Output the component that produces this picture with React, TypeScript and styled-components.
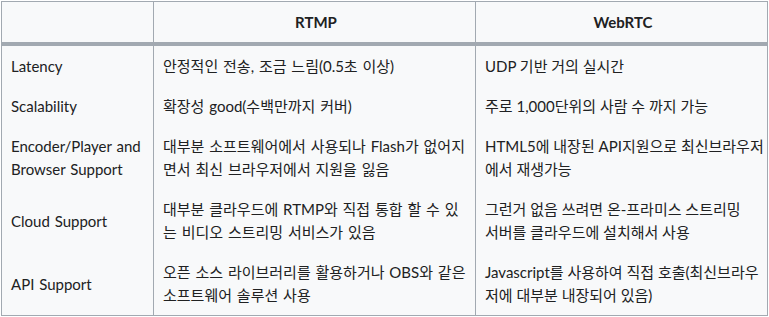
import React from "react";
import styled, { createGlobalStyle } from "styled-components";

const GlobalStyle = createGlobalStyle`
  html, body {
    margin: 0;
    padding: 0;
    background: #ffffff;
  }
  body {
    font-family: Lato, "Noto Sans CJK KR", sans-serif;
    color: #202122;
  }
`;

const Page = styled.div`
  padding: 1px 0 0 1px;
`;

const Table = styled.table`
  width: 767px;
  border-collapse: collapse;
  background: #f8f9fa;
  border: 1px solid #a2a9b1;
  font-size: 15px;
  line-height: 23px;
  word-spacing: 1px;
  table-layout: fixed;
`;

const Col = styled.col<{ $w?: number }>`
  width: ${(p) => (p.$w ? `${p.$w}px` : "auto")};
`;

const HeadCell = styled.th`
  border-left: 1px solid #a2a9b1;
  border-bottom: 4px solid #a2a9b1;
  padding: 9px 6px 8px 9px;
  font-weight: bold;
  text-align: center;
  &:first-child {
    border-left: none;
  }
`;

const Cell = styled.td<{ $keep?: boolean }>`
  border-left: 1px solid #a2a9b1;
  padding: 9px 6px 8px 9px;
  vertical-align: middle;
  word-break: ${(p) => (p.$keep ? "keep-all" : "normal")};
  &:first-child {
    border-left: none;
  }
  &:last-child {
    padding-right: 0;
    word-spacing: 0;
  }
`;

type Row = { name: string; rtmp: string; webrtc: string; keep?: boolean };

const rows: Row[] = [
  { name: "Latency", rtmp: "안정적인 전송, 조금 느림(0.5초 이상)", webrtc: "UDP 기반 거의 실시간" },
  { name: "Scalability", rtmp: "확장성 good(수백만까지 커버)", webrtc: "주로 1,000단위의 사람 수 까지 가능" },
  {
    name: "Encoder/Player and Browser Support",
    rtmp: "대부분 소프트웨어에서 사용되나 Flash가 없어지면서 최신 브라우저에서 지원을 잃음",
    webrtc: "HTML5에 내장된 API지원으로 최신브라우저에서 재생가능",
  },
  {
    name: "Cloud Support",
    rtmp: "대부분 클라우드에 RTMP와 직접 통합 할 수 있는 비디오 스트리밍 서비스가 있음",
    webrtc: "그런거 없음 쓰려면 온-프라미스 스트리밍 서버를 클라우드에 설치해서 사용",
    keep: true,
  },
  {
    name: "API Support",
    rtmp: "오픈 소스 라이브러리를 활용하거나 OBS와 같은 소프트웨어 솔루션 사용",
    webrtc: "Javascript를 사용하여 직접 호출(최신브라우저에 대부분 내장되어 있음)",
  },
];

export default function App() {
  return (
    <Page>
      <GlobalStyle />
      <Table>
        <colgroup>
          <Col $w={152} />
          <Col $w={322} />
          <Col />
        </colgroup>
        <thead>
          <tr>
            <HeadCell></HeadCell>
            <HeadCell>RTMP</HeadCell>
            <HeadCell>WebRTC</HeadCell>
          </tr>
        </thead>
        <tbody>
          {rows.map((r) => (
            <tr key={r.name}>
              <Cell>{r.name}</Cell>
              <Cell>{r.rtmp}</Cell>
              <Cell $keep={r.keep}>{r.webrtc}</Cell>
            </tr>
          ))}
        </tbody>
      </Table>
    </Page>
  );
}
